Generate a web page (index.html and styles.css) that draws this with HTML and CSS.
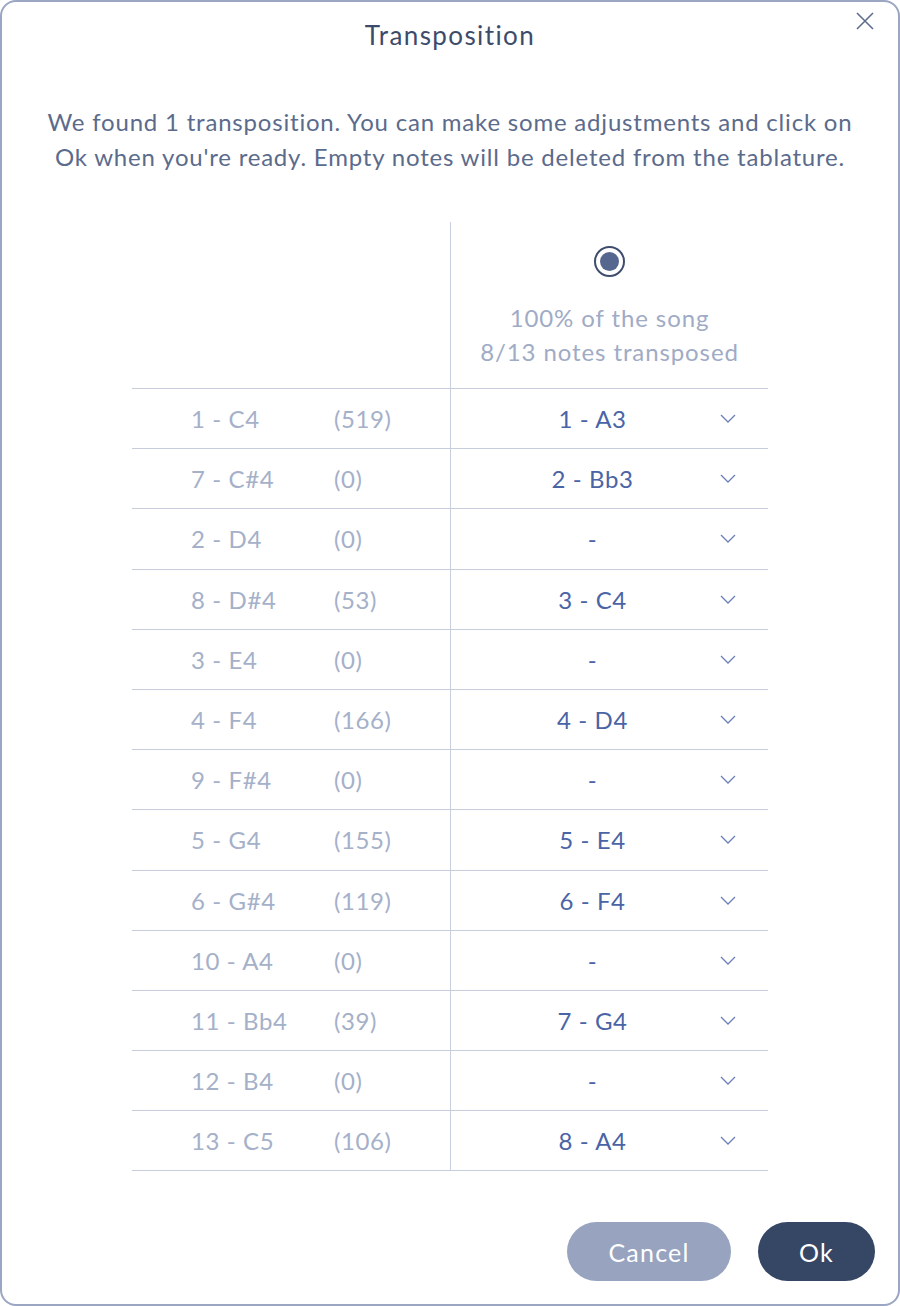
FILE: index.html
```html
<!DOCTYPE html>
<html lang="en">
<head>
  <meta charset="UTF-8">
  <title>Transposition</title>
  <link rel="stylesheet" href="styles.css">
</head>
<body>

<div class="dialog">
  <button class="close" aria-label="Close">
    <svg width="18" height="18" viewBox="0 0 18 18"><path d="M1 1 L17 17 M17 1 L1 17" stroke="#5d6d90" stroke-width="1.6" fill="none"/></svg>
  </button>

  <h1>Transposition</h1>

  <p class="intro">We found 1 transposition. You can make some adjustments and click on<br>Ok when you're ready. Empty notes will be deleted from the tablature.</p>

  <div class="grid">
    <div class="row head">
      <div class="left"></div>
      <div class="right">
        <span class="radio"><span class="dot"></span></span>
        <div class="summary">100% of the song<br>8/13 notes transposed</div>
      </div>
    </div>

    <div class="row note">
      <div class="left"><span class="name">1 - C4</span><span class="count">(519)</span></div>
      <div class="right"><span class="value">1 - A3</span><svg class="chev" viewBox="0 0 16 9"><path d="M1 1 L8 8 L15 1"/></svg></div>
    </div>
    <div class="row note">
      <div class="left"><span class="name">7 - C#4</span><span class="count">(0)</span></div>
      <div class="right"><span class="value">2 - Bb3</span><svg class="chev" viewBox="0 0 16 9"><path d="M1 1 L8 8 L15 1"/></svg></div>
    </div>
    <div class="row note">
      <div class="left"><span class="name">2 - D4</span><span class="count">(0)</span></div>
      <div class="right"><span class="value">-</span><svg class="chev" viewBox="0 0 16 9"><path d="M1 1 L8 8 L15 1"/></svg></div>
    </div>
    <div class="row note">
      <div class="left"><span class="name">8 - D#4</span><span class="count">(53)</span></div>
      <div class="right"><span class="value">3 - C4</span><svg class="chev" viewBox="0 0 16 9"><path d="M1 1 L8 8 L15 1"/></svg></div>
    </div>
    <div class="row note">
      <div class="left"><span class="name">3 - E4</span><span class="count">(0)</span></div>
      <div class="right"><span class="value">-</span><svg class="chev" viewBox="0 0 16 9"><path d="M1 1 L8 8 L15 1"/></svg></div>
    </div>
    <div class="row note">
      <div class="left"><span class="name">4 - F4</span><span class="count">(166)</span></div>
      <div class="right"><span class="value">4 - D4</span><svg class="chev" viewBox="0 0 16 9"><path d="M1 1 L8 8 L15 1"/></svg></div>
    </div>
    <div class="row note">
      <div class="left"><span class="name">9 - F#4</span><span class="count">(0)</span></div>
      <div class="right"><span class="value">-</span><svg class="chev" viewBox="0 0 16 9"><path d="M1 1 L8 8 L15 1"/></svg></div>
    </div>
    <div class="row note">
      <div class="left"><span class="name">5 - G4</span><span class="count">(155)</span></div>
      <div class="right"><span class="value">5 - E4</span><svg class="chev" viewBox="0 0 16 9"><path d="M1 1 L8 8 L15 1"/></svg></div>
    </div>
    <div class="row note">
      <div class="left"><span class="name">6 - G#4</span><span class="count">(119)</span></div>
      <div class="right"><span class="value">6 - F4</span><svg class="chev" viewBox="0 0 16 9"><path d="M1 1 L8 8 L15 1"/></svg></div>
    </div>
    <div class="row note">
      <div class="left"><span class="name">10 - A4</span><span class="count">(0)</span></div>
      <div class="right"><span class="value">-</span><svg class="chev" viewBox="0 0 16 9"><path d="M1 1 L8 8 L15 1"/></svg></div>
    </div>
    <div class="row note">
      <div class="left"><span class="name">11 - Bb4</span><span class="count">(39)</span></div>
      <div class="right"><span class="value">7 - G4</span><svg class="chev" viewBox="0 0 16 9"><path d="M1 1 L8 8 L15 1"/></svg></div>
    </div>
    <div class="row note">
      <div class="left"><span class="name">12 - B4</span><span class="count">(0)</span></div>
      <div class="right"><span class="value">-</span><svg class="chev" viewBox="0 0 16 9"><path d="M1 1 L8 8 L15 1"/></svg></div>
    </div>
    <div class="row note last">
      <div class="left"><span class="name">13 - C5</span><span class="count">(106)</span></div>
      <div class="right"><span class="value">8 - A4</span><svg class="chev" viewBox="0 0 16 9"><path d="M1 1 L8 8 L15 1"/></svg></div>
    </div>
  </div>

  <div class="actions">
    <button class="btn cancel">Cancel</button>
    <button class="btn ok">Ok</button>
  </div>
</div>

</body>
</html>
```

FILE: styles.css
```css
body {
  margin: 0;
  font-family: Lato, "Noto Sans", sans-serif;
  background: #ffffff;
}
.dialog {
  position: relative;
  box-sizing: border-box;
  width: 900px;
  height: 1306px;
  border: 2px solid #9aa6c2;
  border-radius: 16px;
  background: #fff;
}
.close {
  position: absolute;
  top: 10px;
  right: 24px;
  background: none;
  border: none;
  padding: 0;
  cursor: pointer;
}
.close svg {
  display: block;
}
h1 {
  margin: 0;
  padding-top: 16px;
  font-size: 26px;
  line-height: 34px;
  font-weight: 400;
  letter-spacing: 1.4px;
  text-align: center;
  color: #3d4b6b;
}
.intro {
  margin: 52px 0 0;
  font-size: 24px;
  line-height: 35px;
  letter-spacing: 0.8px;
  text-align: center;
  color: #5b6b8c;
}
.grid {
  width: 636px;
  margin: 48px auto 0;
}
.row {
  display: grid;
  grid-template-columns: 318px 1fr;
}
.row .right {
  border-left: 1px solid #c6cddd;
}
.head .right {
  height: 166px;
  box-sizing: border-box;
  padding-top: 24px;
  text-align: center;
}
.radio {
  display: inline-flex;
  align-items: center;
  justify-content: center;
  box-sizing: border-box;
  width: 31px;
  height: 31px;
  border: 2px solid #3e4d6e;
  border-radius: 50%;
}
.radio .dot {
  width: 19px;
  height: 19px;
  border-radius: 50%;
  background: #56678f;
}
.summary {
  margin-top: 24px;
  font-size: 24px;
  line-height: 34px;
  letter-spacing: 0.9px;
  color: #a0abc5;
}
.note {
  height: 60.2px;
  box-sizing: border-box;
  border-top: 1px solid #c6cddd;
  font-size: 24px;
  letter-spacing: 0.6px;
}
.note.last {
  height: 61.2px;
  border-bottom: 1px solid #c6cddd;
}
.note .left {
  display: flex;
  align-items: center;
  padding-left: 59px;
  color: #a5b0c9;
}
.note .name {
  width: 143px;
}
.note .right {
  display: flex;
  align-items: center;
  padding-left: 14px;
  padding-right: 32px;
}
.note .value {
  flex: 1;
  text-align: center;
  color: #4a64a6;
}
.chev {
  width: 16px;
  height: 9px;
  fill: none;
  stroke: #6b80b8;
  stroke-width: 1.3;
}
.actions {
  display: flex;
  justify-content: flex-end;
  gap: 27px;
  margin-top: 51px;
  padding-right: 23px;
}
.btn {
  height: 59px;
  border: none;
  border-radius: 30px;
  color: #fff;
  font-family: inherit;
  font-size: 25px;
  letter-spacing: 1.2px;
  cursor: pointer;
}
.cancel {
  width: 164px;
  background: #97a3bf;
}
.ok {
  width: 117px;
  background: #364665;
}
```
